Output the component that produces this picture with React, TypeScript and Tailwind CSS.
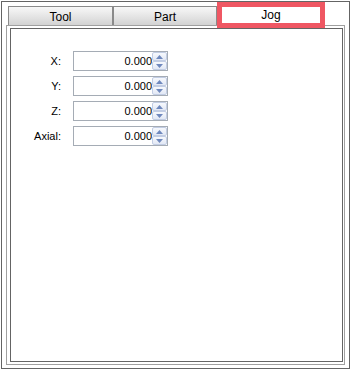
import React from "react";

function Spin({ up }: { up: boolean }) {
  return (
    <div className="h-[9px] w-[15px] border border-[#c2cde4] rounded-[2px] bg-linear-to-b from-[#f7f9fd] to-[#e2e8f5] flex items-center justify-center">
      <svg width="7" height="4" viewBox="0 0 7 4">
        {up ? (
          <polygon points="3.5,0 7,4 0,4" fill="#6f88bd" />
        ) : (
          <polygon points="0,0 7,0 3.5,4" fill="#6f88bd" />
        )}
      </svg>
    </div>
  );
}

function Field({ label }: { label: string }) {
  return (
    <>
      <div className="text-right leading-[20px] h-[20px]">{label}</div>
      <div className="h-[20px] w-[95px] border border-[#a5acb5] bg-white flex">
        <div className="flex-1 text-right leading-[18px]">0.000</div>
        <div className="w-[15px] flex flex-col">
          <Spin up />
          <Spin up={false} />
        </div>
      </div>
    </>
  );
}

export default function App() {
  return (
    <div className="w-[351px] h-[370px] bg-white p-px font-['Liberation_Sans',Arial,sans-serif] text-[11px] text-black">
      <div className="h-full border border-[#646464] flex flex-col px-[4px] pt-[4px] pb-[3px]">
        <div className="flex h-[19px] pl-[2px] shrink-0 text-[12px]">
          <div className="w-[105px] h-[19px] border-t border-l border-r border-[#8a8a8a] bg-linear-to-b from-[#f8f8f8] to-[#d3d3d3] flex items-center justify-center leading-none pt-px">
            Tool
          </div>
          <div className="w-[104px] h-[19px] border-t border-l border-r border-[#8a8a8a] bg-linear-to-b from-[#f8f8f8] to-[#d3d3d3] flex items-center justify-center leading-none pt-px">
            Part
          </div>
          <div className="relative z-10 -mt-[4px] h-[26px] w-[108px] border-[5px] border-[#ef5763] bg-white flex items-center justify-center leading-none">
            Jog
          </div>
        </div>
        <div className="flex-1 border border-[#a0a0a0] pl-[3px] pt-[2px] pr-px pb-[2px] flex">
          <div className="flex-1 border border-[#646464] pt-[22px]">
            <div className="grid grid-cols-[50px_95px] gap-x-[12px] gap-y-[5px]">
              <Field label="X:" />
              <Field label="Y:" />
              <Field label="Z:" />
              <Field label="Axial:" />
            </div>
          </div>
        </div>
      </div>
    </div>
  );
}
